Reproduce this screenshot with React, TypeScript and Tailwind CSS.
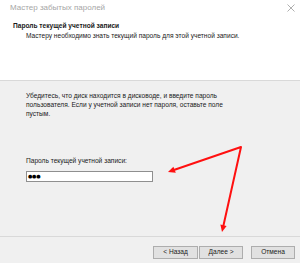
import React from 'react';

const Arrows: React.FC = () => (
  <svg className="absolute inset-0 pointer-events-none" width="300" height="263" viewBox="0 0 300 263">
    <g stroke="#ff1010" strokeWidth={2} fill="none" strokeLinecap="round" strokeLinejoin="round">
      <polyline points="174.6,169.7 241,147 223.5,225.2" />
    </g>
    <g fill="#ff1010">
      <polygon points="168,172 175.8,172.7 173.4,166.7" />
      <polygon points="222,232 226.6,225.9 220.4,224.5" />
    </g>
  </svg>
);

const App: React.FC = () => {
  return (
    <div className="relative w-[300px] h-[263px] overflow-hidden flex flex-col bg-[#f0f0f0] font-['Liberation_Sans',sans-serif] text-[#1a1a1a]">
      {/* title bar */}
      <div className="h-[15px] bg-white flex items-center justify-between pl-[10px] pr-[4px]">
        <span className="text-[8px] text-[#a6a6a6] leading-none">Мастер забытых паролей</span>
        <svg width="8" height="8" viewBox="0 0 8 8" className="mr-[1px]">
          <path d="M0.5 0.5 L7.5 7.5 M7.5 0.5 L0.5 7.5" stroke="#9a9a9a" strokeWidth={0.8} />
        </svg>
      </div>

      {/* header */}
      <div className="h-[65px] bg-white pt-[6px]">
        <div className="pl-[13px] text-[6.6px] font-bold leading-[9px]">Пароль текущей учетной записи</div>
        <div className="pl-[26px] text-[6.6px] leading-[9px] mt-[1px]">
          Мастеру необходимо знать текущий пароль для этой учетной записи.
        </div>
      </div>
      <div className="h-px bg-[#d9d9d9]" />

      {/* body */}
      <div className="flex-1 pl-[26px] pt-[10px] text-[6.6px] leading-[9px]">
        <div>
          <span className="block whitespace-nowrap">Убедитесь, что диск находится в дисководе, и введите пароль</span>
          <span className="block whitespace-nowrap">пользователя. Если у учетной записи нет пароля, оставьте поле</span>
          <span className="block whitespace-nowrap">пустым.</span>
        </div>
        <div className="mt-[38px] whitespace-nowrap">Пароль текущей учетной записи:</div>
        <div className="mt-[6px] w-[127px] h-[11px] bg-white border border-[#8f8f8f] flex items-center pl-[1px]">
          <span className="font-['DejaVu_Sans',sans-serif] text-[5px] leading-none tracking-[-0.3px] text-black">●●●</span>
        </div>
      </div>

      {/* footer */}
      <div className="h-px bg-[#d9d9d9]" />
      <div className="h-[26px] flex items-start justify-end pr-[5px] pt-[9px] text-[6.6px]">
        <button className="w-[45px] h-[13px] bg-[#e1e1e1] border border-[#adadad] leading-none">&lt; Назад</button>
        <button className="ml-[1px] w-[44px] h-[13px] bg-[#e1e1e1] border border-[#adadad] leading-none">Далее &gt;</button>
        <button className="ml-[8px] w-[44px] h-[13px] bg-[#e1e1e1] border border-[#adadad] leading-none">Отмена</button>
      </div>

      <Arrows />
    </div>
  );
};

export default App;
